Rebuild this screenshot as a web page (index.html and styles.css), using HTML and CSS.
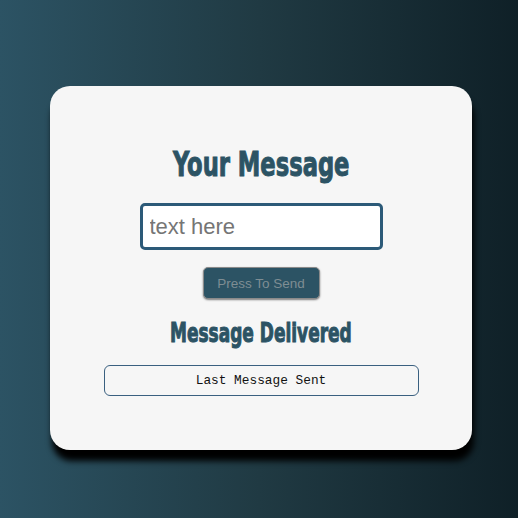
FILE: index.html
```html
<!DOCTYPE html>
<html>
<head>
<meta charset="utf-8">
<link rel="stylesheet" href="styles.css">
</head>
<body>
<main class="card">
  <h1 class="title"><span class="squash">Your Message</span></h1>
  <input class="msg-input" type="text" placeholder="text here">
  <button class="send-btn">Press To Send</button>
  <h2 class="status"><span class="squash">Message Delivered</span></h2>
  <div class="last">Last Message Sent</div>
</main>
</body>
</html>
```
FILE: styles.css
```css
html, body {
  margin: 0;
  padding: 0;
  height: 100%;
}
body {
  width: 518px;
  height: 518px;
  background: linear-gradient(to right, #2c5364, #203a43, #0f2027);
  display: flex;
  justify-content: center;
  padding-top: 86px;
  box-sizing: border-box;
}
.card {
  width: 422px;
  height: 364px;
  margin-left: 4px;
  background: #f6f6f6;
  border-radius: 20px;
  box-shadow: 2px 11px 6px #000;
  display: flex;
  flex-direction: column;
  align-items: center;
  padding-top: 58px;
  box-sizing: border-box;
}
.title, .status {
  margin: 0;
  color: #2c5364;
  font-family: "DejaVu Sans", sans-serif;
  font-stretch: condensed;
  font-weight: bold;
  text-align: center;
  -webkit-text-stroke: 1px #2c5364;
}
.title {
  font-size: 34px;
  line-height: 40px;
  height: 40px;
}
.squash {
  display: inline-block;
}
.title .squash {
  transform: scaleX(0.74);
}
.status .squash {
  transform: scaleX(0.7);
}
.msg-input {
  margin-top: 19px;
  width: 243px;
  height: 47px;
  box-sizing: border-box;
  border: 3px solid #2c5a78;
  border-radius: 5px;
  padding: 0 7px;
  font-family: "Liberation Sans", Arial, sans-serif;
  font-size: 22px;
  background: #fff;
  outline: none;
}
.msg-input::placeholder {
  color: #757575;
}
.send-btn {
  margin-top: 17px;
  width: 117px;
  height: 32px;
  background: #2c5364;
  border: 1px solid #8a8a8a;
  border-radius: 5px;
  color: #7e8d93;
  font-family: "Liberation Sans", Arial, sans-serif;
  font-size: 13.5px;
  box-shadow: 0 1px 2px rgba(0,0,0,0.5);
  padding: 0;
}
.status {
  margin-top: 18px;
  font-size: 27px;
  line-height: 32px;
  height: 32px;
}
.last {
  margin-top: 16px;
  width: 315px;
  height: 31px;
  box-sizing: border-box;
  border: 1px solid #3a6080;
  border-radius: 6px;
  display: flex;
  align-items: center;
  justify-content: center;
  font-family: "Liberation Mono", "Courier New", monospace;
  font-size: 12.8px;
  color: #111;
}
```
